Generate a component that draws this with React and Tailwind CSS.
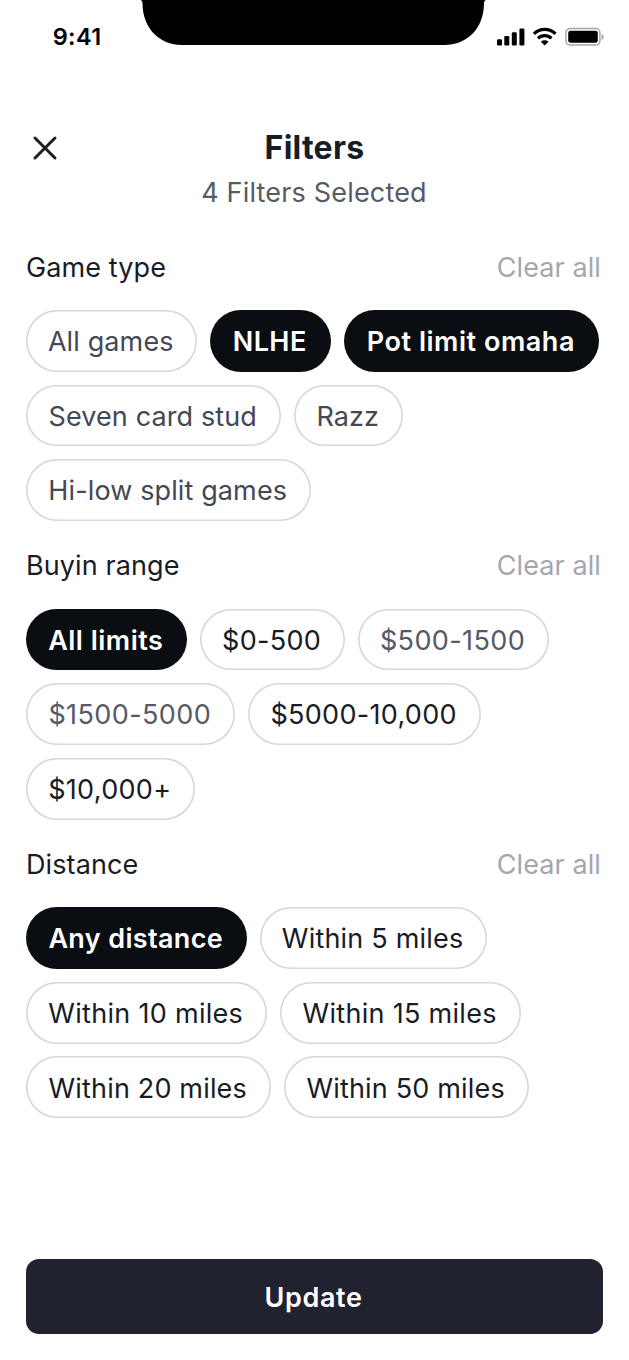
import React, { useState } from 'react'

const sections = [
    {
        title: 'Game type',
        options: [
            { label: 'All games', size: 'w-[171px] tracking-[0.12px]', tone: 'text-[#444854]' },
            { label: 'NLHE', size: 'w-[121.2px] tracking-[0.4px]', selected: true },
            { label: 'Pot limit omaha', size: 'w-[255.3px] tracking-[0.54px]', selected: true },
            { label: 'Seven card stud', size: 'w-[255px] tracking-[0.12px]', tone: 'text-[#444854]' },
            { label: 'Razz', size: 'w-[109.2px] tracking-[0.1px]', tone: 'text-[#444854]' },
            { label: 'Hi-low split games', size: 'w-[285px] tracking-[0.12px]', tone: 'text-[#444854]' }
        ]
    },
    {
        title: 'Buyin range',
        options: [
            { label: 'All limits', size: 'w-[161px] tracking-[0.5px]', selected: true },
            { label: '$0-500', size: 'w-[145px] tracking-[0.3px]' },
            { label: '$500-1500', size: 'w-[191px] tracking-[0.4px]', tone: 'text-[#565a67]' },
            { label: '$1500-5000', size: 'w-[209px] tracking-[0.4px]', tone: 'text-[#565a67]' },
            { label: '$5000-10,000', size: 'w-[233px] tracking-[0.3px]' },
            { label: '$10,000+', size: 'w-[169px] tracking-[0.3px]' }
        ]
    },
    {
        title: 'Distance',
        options: [
            { label: 'Any distance', size: 'w-[221px] tracking-[0.35px]', selected: true },
            { label: 'Within 5 miles', size: 'w-[227px] tracking-[0.2px]' },
            { label: 'Within 10 miles', size: 'w-[241px] tracking-[0.3px]' },
            { label: 'Within 15 miles', size: 'w-[241px] tracking-[0.3px]' },
            { label: 'Within 20 miles', size: 'w-[245px] tracking-[0.17px]' },
            { label: 'Within 50 miles', size: 'w-[245px] tracking-[0.17px]' }
        ]
    }
]

function StatusBar() {
    return (
        <div className="relative h-[75px] shrink-0">
            {/* Notch */}
            <svg className="absolute left-[140px] top-0" width="347" height="46" viewBox="0 0 347 46">
                <path d="M0.5 0C2 0.6 2.5 1.5 2.5 4C3 28 19 45 42 45H304C328 45 343.5 28 344 4C344 1.5 344.5 0.6 346 0Z" fill="#000" />
            </svg>

            <div className="flex items-center justify-between pl-[52.7px] pr-[25px] pt-[23px]">
                <span className="text-[23.5px] leading-7 font-semibold tracking-[0.35px] text-black">9:41</span>

                <svg width="109" height="20" viewBox="0 0 109 20">
                    <rect x="2" y="12.2" width="5" height="6.3" rx="1.3" />
                    <rect x="9.3" y="9" width="5" height="9.5" rx="1.3" />
                    <rect x="16.8" y="5.3" width="5" height="13.2" rx="1.3" />
                    <rect x="24.4" y="1.5" width="5" height="17" rx="1.3" />
                    <g fill="none" stroke="#000" strokeWidth="3.2">
                        <path d="M38.9 6.8A15.4 15.4 0 0 1 60.5 6.8" />
                        <path d="M43 11.3A9.5 9.5 0 0 1 56.4 11.3" />
                    </g>
                    <path d="M49.7 18.6L45.9 14.8A5.6 5.6 0 0 1 53.5 14.8Z" />
                    <rect x="70.9" y="1.5" width="34" height="16.6" rx="4.2" fill="none" stroke="#a6a6a6" strokeWidth="1.5" />
                    <rect x="73.2" y="3.8" width="29.6" height="12" rx="2.4" />
                    <path d="M106.6 7v6c1.3-.5 2.1-1.7 2.1-3s-.8-2.5-2.1-3z" fill="#a6a6a6" />
                </svg>
            </div>
        </div>
    )
}

function Chip({ option, onClick }) {
    const look = option.selected
        ? 'bg-[#0a0d12] font-semibold text-white'
        : `bg-white shadow-[inset_0_0_0_1.6px_#d6d7db] ${option.tone || 'text-[#171c27]'}`

    return (
        <button
            onClick={onClick}
            className={`h-[61.75px] rounded-full pt-[3px] pr-[1.5px] text-center whitespace-nowrap ${option.size} ${look}`}
        >
            {option.label}
        </button>
    )
}

export default function App() {
    const [groups, setGroups] = useState(sections)

    function toggle(title, label) {
        setGroups((prev) => prev.map((g) => g.title !== title ? g : {
            ...g,
            options: g.options.map((o) => o.label === label ? { ...o, selected: !o.selected } : o)
        }))
    }

    function clearAll(title) {
        setGroups((prev) => prev.map((g) => g.title !== title ? g : {
            ...g,
            options: g.options.map((o) => ({ ...o, selected: false }))
        }))
    }

    const count = groups.reduce((n, g) => n + g.options.filter((o) => o.selected).length, 0)

    return (
        <div className="flex h-[1360px] w-[629px] flex-col overflow-hidden bg-white font-['Inter',sans-serif] text-[27px] tracking-[0.1px] text-[#171c27]">
            <StatusBar />

            <header className="grid h-[160.4px] shrink-0 grid-cols-[38px_1fr_38px] content-start px-[26px] pt-[53px]">
                <button aria-label="Close" className="flex h-10 items-center justify-center">
                    <svg width="26" height="26" viewBox="0 0 26 26" fill="none" stroke="#1d1d1b" strokeWidth="3" strokeLinecap="round">
                        <path d="M3 3L23 23M23 3L3 23" />
                    </svg>
                </button>
                <h1 className="text-center text-[32px] leading-10 font-bold tracking-[0.25px]">Filters</h1>
                <p className="col-span-3 mt-[4.6px] pr-[1px] text-center leading-10 tracking-[0.18px] text-[#565a67]">{count} Filters Selected</p>
            </header>

            <main className="flex grow flex-col gap-[12.9px] px-[26px]">
                {groups.map((group) => (
                    <section key={group.title} className="flex flex-col gap-[12.9px]">
                        <div className="flex h-[61.75px] items-center justify-between pt-[3px] pr-[2px]">
                            <h2>{group.title}</h2>
                            <button onClick={() => clearAll(group.title)} className="text-[#a4a6ae]">Clear all</button>
                        </div>
                        <div className="-mr-2 flex flex-wrap gap-[12.9px]">
                            {group.options.map((option) => (
                                <Chip key={option.label} option={option} onClick={() => toggle(group.title, option.label)} />
                            ))}
                        </div>
                    </section>
                ))}
            </main>

            <footer className="shrink-0 px-[26px] pb-[26px]">
                <button className="h-[75px] w-full rounded-[13px] bg-[#212230] pt-[3.5px] pr-[2px] font-semibold tracking-[0.65px] text-white">Update</button>
            </footer>
        </div>
    )
}
